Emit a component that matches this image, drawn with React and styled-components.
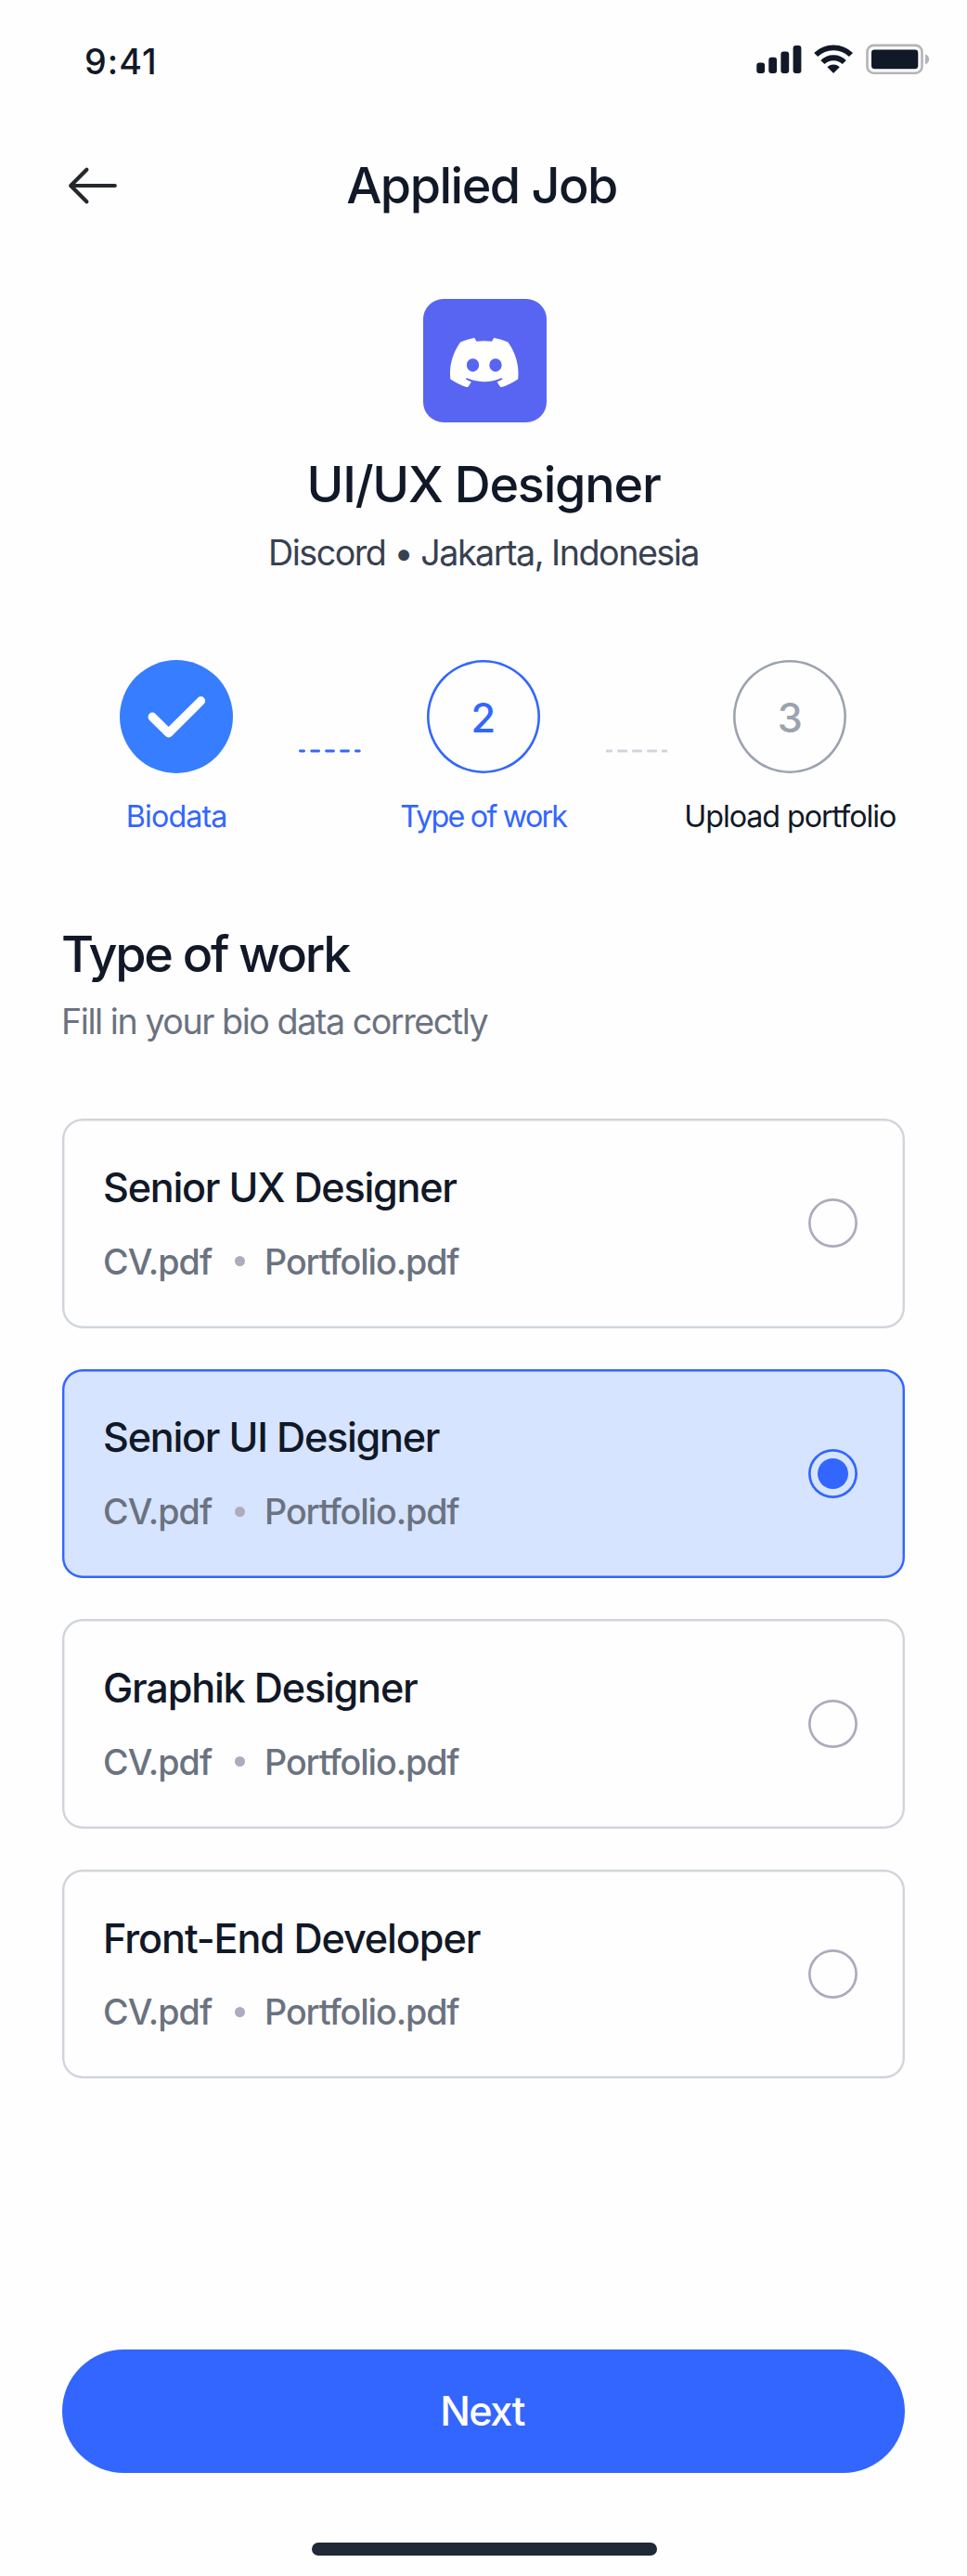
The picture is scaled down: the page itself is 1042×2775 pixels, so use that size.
import React, { useState } from "react";
import styled, { createGlobalStyle } from "styled-components";

const color = {
  page: "#fefefe",
  ink: "#111827",
  body: "#374151",
  muted: "#6b7280",
  faint: "#9ca3af",
  line: "#d1d5db",
  bullet: "#adabbd",
  blue: "#3366ff",
  blueDone: "#377dff",
  blueSoft: "#d6e4ff",
  discord: "#5865f2",
  home: "#1f2937",
};

const GlobalStyle = createGlobalStyle`
  *, *::before, *::after { box-sizing: border-box; }
  body {
    margin: 0;
    background: ${color.page};
    color: ${color.ink};
    font-family: Inter, "Liberation Sans", sans-serif;
  }
  h1, h2, h3, p { margin: 0; font-weight: inherit; }
`;

const Screen = styled.div`
  display: flex;
  flex-direction: column;
  width: 1042px;
  height: 2775px;
  background: ${color.page};
  white-space: nowrap;
`;

const StatusBar = styled.div`
  display: flex;
  justify-content: space-between;
  align-items: flex-start;
  height: 122px;
  padding: 46px 39px 0 91px;
`;

const Time = styled.span`
  font-size: 37.7px;
  line-height: 41px;
  font-weight: 500;
  letter-spacing: 1px;
`;

const StatusIcons = styled.svg`
  display: block;
  width: 188px;
  height: 36px;
`;

const Header = styled.header`
  display: grid;
  grid-template-columns: 60px 1fr 60px;
  align-items: center;
  height: 156px;
  padding: 0 70px;
`;

const BackButton = styled.button`
  display: flex;
  padding: 0;
  border: 0;
  background: none;
  cursor: pointer;

  svg { display: block; width: 60px; height: 60px; }
`;

const HeaderTitle = styled.h1`
  padding-right: 4px;
  text-align: center;
  font-size: 53.9px;
  line-height: 66px;
  font-weight: 500;
  letter-spacing: -1.5px;
`;

const Company = styled.section`
  display: flex;
  flex-direction: column;
  align-items: center;
  padding-top: 44px;
`;

const LogoTile = styled.div`
  display: flex;
  justify-content: center;
  align-items: flex-start;
  width: 133.4px;
  height: 133.4px;
  margin-left: 2.5px;
  padding-top: 41.6px;
  border-radius: 22px;
  background: ${color.discord};

  svg { display: block; width: 73.5px; height: 53.4px; }
`;

const JobTitle = styled.h2`
  margin-top: 33.4px;
  font-size: 53.9px;
  line-height: 66px;
  font-weight: 500;
  letter-spacing: -1.21px;
`;

const JobPlace = styled.p`
  margin-top: 15.2px;
  color: ${color.body};
  font-size: 37.7px;
  line-height: 50px;
  letter-spacing: -1.51px;
`;

const Steps = styled.div`
  display: flex;
  margin: 90.7px 0 0 76.2px;
`;

const Step = styled.div`
  display: flex;
  flex-direction: column;
  align-items: center;
  width: 228px;
`;

const StepCircle = styled.div`
  display: flex;
  align-items: center;
  justify-content: center;
  width: 122.3px;
  height: 122.3px;
  padding-top: ${(p) => (p.$state === "done" ? 0 : "2px")};
  border-radius: 50%;
  background: ${(p) => (p.$state === "done" ? color.blueDone : "transparent")};
  box-shadow: ${(p) =>
    p.$state === "done"
      ? "none"
      : `inset 0 0 0 2.6px ${p.$state === "current" ? color.blue : color.faint}`};
  color: ${(p) => (p.$state === "current" ? color.blue : color.faint)};
  font-size: 43.2px;
  line-height: 54px;
  font-weight: 500;

  svg { display: block; width: 100%; height: 100%; }
`;

const StepLabel = styled.span`
  margin-top: 24px;
  color: ${(p) => (p.$state === "todo" ? color.ink : color.blue)};
  font-size: 32.3px;
  line-height: 46px;
  letter-spacing: ${(p) => p.$tracking}px;
`;

const Connector = styled.svg`
  display: block;
  flex: none;
  width: 66.7px;
  height: 4px;
  margin: 96.6px 17.95px 0;
`;

const Intro = styled.section`
  padding: 91.7px 66px 0;
`;

const SectionTitle = styled.h2`
  font-size: 53.9px;
  line-height: 66px;
  font-weight: 500;
  letter-spacing: -2.3px;
`;

const SectionHint = styled.p`
  margin-top: 14.6px;
  color: ${color.muted};
  font-size: 37.7px;
  line-height: 50px;
  letter-spacing: -1.48px;
`;

const Options = styled.div`
  display: flex;
  flex-direction: column;
  gap: 44.3px;
  padding: 80px 67px 0;
`;

const Option = styled.div`
  display: flex;
  justify-content: space-between;
  align-items: center;
  height: 225.3px;
  padding: 0 51px 0 44px;
  border-radius: 22px;
  background: ${(p) => (p.$selected ? color.blueSoft : "transparent")};
  box-shadow: inset 0 0 0 2.4px ${(p) => (p.$selected ? color.blue : color.line)};
  cursor: pointer;
`;

const OptionText = styled.div`
  padding-bottom: 2.5px;
`;

const OptionTitle = styled.h3`
  font-size: 43.2px;
  line-height: 54px;
  font-weight: 500;
  letter-spacing: ${(p) => p.$tracking}px;
`;

const Files = styled.div`
  display: flex;
  align-items: center;
  margin-top: 29.8px;
  color: ${color.muted};
  font-size: 37.7px;
  line-height: 46px;
  font-weight: 500;
`;

const FileName = styled.span`
  letter-spacing: ${(p) => p.$tracking}px;
`;

const Bullet = styled.span`
  width: 11px;
  height: 11px;
  margin: 0 21px 0 24.8px;
  border-radius: 50%;
  background: ${color.bullet};
`;

const Radio = styled.span`
  display: flex;
  align-items: center;
  justify-content: center;
  width: 52.8px;
  height: 52.8px;
  border-radius: 50%;
  box-shadow: inset 0 0 0 2.7px ${(p) => (p.$selected ? color.blue : color.bullet)};
`;

const RadioDot = styled.span`
  width: 33.4px;
  height: 33.4px;
  border-radius: 50%;
  background: ${color.blue};
`;

const Footer = styled.footer`
  display: flex;
  flex-direction: column;
  align-items: center;
  margin-top: auto;
  padding: 0 67px 22px;
`;

const NextButton = styled.button`
  width: 100%;
  height: 133.5px;
  padding: 0 3px 0 0;
  border: 0;
  border-radius: 67px;
  background: ${color.blue};
  color: #fff;
  font-family: inherit;
  font-size: 43.2px;
  font-weight: 500;
  letter-spacing: -1.47px;
  cursor: pointer;
`;

const HomeIndicator = styled.div`
  width: 372px;
  height: 14px;
  margin: 75px 0 0 2px;
  border-radius: 7px;
  background: ${color.home};
`;

const PhoneStatus = () => (
  <StatusIcons viewBox="815 46 188 36" fill={color.ink}>
    <rect x="815.3" y="67.6" width="8.8" height="11.4" rx="3" />
    <rect x="828.3" y="61.8" width="8.8" height="17.2" rx="3" />
    <rect x="841.4" y="55.4" width="8.8" height="23.6" rx="3" />
    <rect x="854.6" y="49" width="8.8" height="30" rx="3" />
    <g fill="none" stroke={color.ink} strokeWidth="5.8">
      <path d="M879.2 59A27 27 0 0 1 917 59" />
      <path d="M886.4 67A16.8 16.8 0 0 1 909.8 67" />
    </g>
    <path
      d="M892.3 72.3A9 9 0 0 1 903.9 72.3L898.1 78.1Z"
      stroke={color.ink}
      strokeWidth="1.2"
      strokeLinejoin="round"
    />
    <rect x="934.5" y="48.9" width="59" height="29.8" rx="7" fill="none" stroke="#b4b5b9" strokeWidth="2.6" />
    <rect x="939" y="53.6" width="50.3" height="20.6" rx="3.4" />
    <path d="M997 58.5C999.6 59.4 1001.2 61.4 1001.2 63.9S999.6 68.4 997 69.3Z" fill="#b4b5b9" />
  </StatusIcons>
);

const BackIcon = () => (
  <svg viewBox="70 170 60 60" fill="none" stroke="#24282d" strokeWidth="4.2" strokeLinecap="round" strokeLinejoin="round">
    <path d="M93.4 182.8L76.2 200L93.4 217.2" />
    <path d="M123.8 200H77" />
  </svg>
);

const DiscordLogo = () => (
  <svg viewBox="0 2.84 24 18.32" preserveAspectRatio="none" fill="#fff">
    <path d="M20.317 4.3698a19.7913 19.7913 0 00-4.8851-1.5152.0741.0741 0 00-.0785.0371c-.211.3753-.4447.8648-.6083 1.2495-1.8447-.2762-3.68-.2762-5.4868 0-.1636-.3933-.4058-.8742-.6177-1.2495a.077.077 0 00-.0785-.037 19.7363 19.7363 0 00-4.8852 1.515.0699.0699 0 00-.0321.0277C.5334 9.0458-.319 13.5799.0992 18.0578a.0824.0824 0 00.0312.0561c2.0528 1.5076 4.0413 2.4228 5.9929 3.0294a.0777.0777 0 00.0842-.0276c.4616-.6304.8731-1.2952 1.226-1.9942a.076.076 0 00-.0416-.1057c-.6528-.2476-1.2743-.5495-1.8722-.8923a.077.077 0 01-.0076-.1277c.1258-.0943.2517-.1923.3718-.2914a.0743.0743 0 01.0776-.0105c3.9278 1.7933 8.18 1.7933 12.0614 0a.0739.0739 0 01.0785.0095c.1202.099.246.1981.3728.2924a.077.077 0 01-.0066.1276 12.2986 12.2986 0 01-1.873.8914.0766.0766 0 00-.0407.1067c.3604.698.7719 1.3628 1.225 1.9932a.076.076 0 00.0842.0286c1.961-.6067 3.9495-1.5219 6.0023-3.0294a.077.077 0 00.0313-.0552c.5004-5.177-.8382-9.6739-3.5485-13.6604a.061.061 0 00-.0312-.0286zM8.02 15.3312c-1.1825 0-2.1569-1.0857-2.1569-2.419 0-1.3332.9555-2.4189 2.157-2.4189 1.2108 0 2.1757 1.0952 2.1568 2.419 0 1.3332-.9555 2.4189-2.1569 2.4189zm7.9748 0c-1.1825 0-2.1569-1.0857-2.1569-2.419 0-1.3332.9554-2.4189 2.1569-2.4189 1.2108 0 2.1757 1.0952 2.1568 2.419 0 1.3332-.946 2.4189-2.1568 2.4189z" />
  </svg>
);

const CheckIcon = () => (
  <svg viewBox="0 0 122.3 122.3" fill="none" stroke="#fff" strokeWidth="9.4" strokeLinecap="round" strokeLinejoin="round">
    <path d="M35.2 61.3L52.7 78.7L87.5 44" />
  </svg>
);

const dashes = [[0, 7], [12.3, 10.7], [28.2, 10.7], [44.2, 10.7], [60, 6.7]];

const StepConnector = ({ active }) => (
  <Connector viewBox="0 0 66.7 4" fill={active ? color.blue : color.line}>
    {dashes.map(([x, width]) => (
      <rect key={x} x={x} y="0.6" width={width} height="2.8" rx={active ? 1.4 : 0.3} />
    ))}
  </Connector>
);

const steps = [
  { label: "Biodata", state: "done", tracking: -0.9 },
  { label: "Type of work", state: "current", tracking: -1.8 },
  { label: "Upload portfolio", state: "todo", tracking: -1.08 },
];

const jobs = [
  { title: "Senior UX Designer", tracking: -1.27 },
  { title: "Senior UI Designer", tracking: -1.27 },
  { title: "Graphik Designer", tracking: -1.22 },
  { title: "Front-End Developer", tracking: -1.1 },
];

export default function App() {
  const [selected, setSelected] = useState(1);

  return (
    <>
      <GlobalStyle />
      <Screen>
        <StatusBar>
          <Time>9:41</Time>
          <PhoneStatus />
        </StatusBar>

        <Header>
          <BackButton aria-label="Back">
            <BackIcon />
          </BackButton>
          <HeaderTitle>Applied Job</HeaderTitle>
        </Header>

        <Company>
          <LogoTile>
            <DiscordLogo />
          </LogoTile>
          <JobTitle>UI/UX Designer</JobTitle>
          <JobPlace>Discord • Jakarta, Indonesia</JobPlace>
        </Company>

        <Steps>
          {steps.map((step, i) => (
            <React.Fragment key={step.label}>
              {i > 0 && <StepConnector active={step.state === "current"} />}
              <Step>
                <StepCircle $state={step.state}>
                  {step.state === "done" ? <CheckIcon /> : i + 1}
                </StepCircle>
                <StepLabel $state={step.state} $tracking={step.tracking}>
                  {step.label}
                </StepLabel>
              </Step>
            </React.Fragment>
          ))}
        </Steps>

        <Intro>
          <SectionTitle>Type of work</SectionTitle>
          <SectionHint>Fill in your bio data correctly</SectionHint>
        </Intro>

        <Options role="radiogroup">
          {jobs.map((job, i) => (
            <Option
              key={job.title}
              role="radio"
              aria-checked={i === selected}
              $selected={i === selected}
              onClick={() => setSelected(i)}
            >
              <OptionText>
                <OptionTitle $tracking={job.tracking}>{job.title}</OptionTitle>
                <Files>
                  <FileName $tracking={-0.96}>CV.pdf</FileName>
                  <Bullet />
                  <FileName $tracking={-1.11}>Portfolio.pdf</FileName>
                </Files>
              </OptionText>
              <Radio $selected={i === selected}>{i === selected && <RadioDot />}</Radio>
            </Option>
          ))}
        </Options>

        <Footer>
          <NextButton>Next</NextButton>
          <HomeIndicator />
        </Footer>
      </Screen>
    </>
  );
}
